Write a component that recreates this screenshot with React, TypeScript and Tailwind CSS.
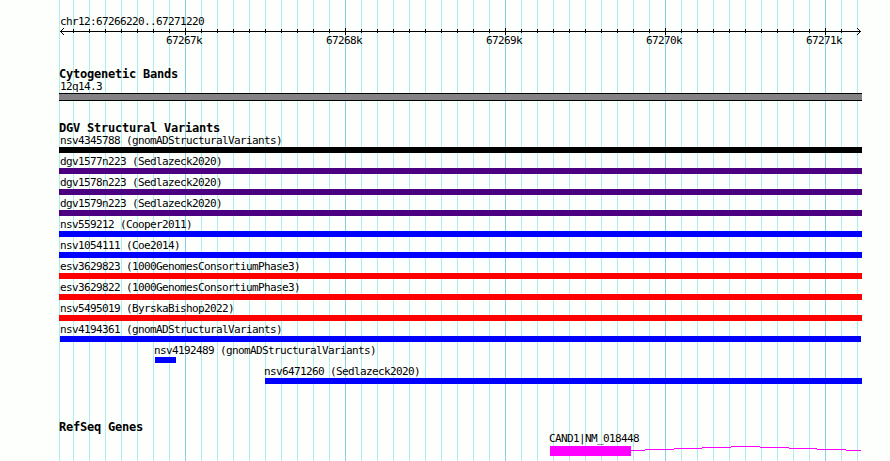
const MINOR = Array.from({ length: 50 }, (_, i) => 73 + i * 16);
const isMajor = (x: number) => (x - 185) % 160 === 0;

const BLACK = 'bg-black';
const INDIGO = 'bg-[#4b0082]';
const BLUE = 'bg-[#0000ff]';
const RED = 'bg-[#ff0000]';

const VARIANTS = [
  { name: 'nsv4345788 (gnomADStructuralVariants)', color: BLACK },
  { name: 'dgv1577n223 (Sedlazeck2020)', color: INDIGO },
  { name: 'dgv1578n223 (Sedlazeck2020)', color: INDIGO },
  { name: 'dgv1579n223 (Sedlazeck2020)', color: INDIGO },
  { name: 'nsv559212 (Cooper2011)', color: BLUE },
  { name: 'nsv1054111 (Coe2014)', color: BLUE },
  { name: 'esv3629823 (1000GenomesConsortiumPhase3)', color: RED },
  { name: 'esv3629822 (1000GenomesConsortiumPhase3)', color: RED },
  { name: 'nsv5495019 (ByrskaBishop2022)', color: RED },
  { name: 'nsv4194361 (gnomADStructuralVariants)', color: BLUE, row: 'pl-[60px]', label: '', bar: 'w-[801px]' },
  { name: 'nsv4192489 (gnomADStructuralVariants)', color: BLUE, row: 'pl-[155px]', label: '-ml-px', bar: 'w-[21px]' },
  { name: 'nsv6471260 (Sedlazeck2020)', color: BLUE, row: 'pl-[265px]', label: '-ml-px', bar: 'w-[597px]' },
];

const INTRON = 'M0 4.5H14M14 3.5H43M43 2.5H71M71 1.5H100M100 .5H129M129 1.5H158M158 2.5H186M186 3.5H215M215 4.5H230';

function Title({ children }: { children: string }) {
  return (
    <h2 className="h-3 pl-[59px] text-[12px] leading-[12px] font-bold tracking-[-0.224px]">{children}</h2>
  );
}

function Grid() {
  return (
    <svg className="absolute inset-0 -z-10" width="890" height="461" shapeRendering="crispEdges">
      <rect x="59" width="1" height="461" fill="#afeeee" />
      {MINOR.map((x) => (
        <rect key={x} x={x} width="1" height="461" fill={isMajor(x) ? '#87ceeb' : '#afeeee'} />
      ))}
    </svg>
  );
}

function Axis() {
  return (
    <svg className="block" width="890" height="7" shapeRendering="crispEdges">
      <rect x="60" y="3" width="801" height="1" />
      {[1, 2, 3].map((d) => (
        <g key={d}>
          <rect x={60 + d} y={3 - d} width="1" height="1" />
          <rect x={60 + d} y={3 + d} width="1" height="1" />
          <rect x={860 - d} y={3 - d} width="1" height="1" />
          <rect x={860 - d} y={3 + d} width="1" height="1" />
        </g>
      ))}
      {MINOR.slice(0, 49).map((x) =>
        isMajor(x) ? (
          <rect key={x} x={x} y="0" width="1" height="7" />
        ) : (
          <rect key={x} x={x} y="1" width="1" height="4" />
        ),
      )}
    </svg>
  );
}

export default function App() {
  return (
    <main className="relative isolate h-[461px] w-[890px] overflow-hidden bg-[#fdfffc] pt-[15px] font-['DejaVu_Sans_Mono',monospace] text-[11px] leading-[14px] tracking-[-0.622px] whitespace-pre text-black">
      <Grid />
      <header className="h-[53px]">
        <div className="h-[13px] pl-[60px]">chr12:67266220..67271220</div>
        <Axis />
        <div className="-mt-px flex gap-[124px] pl-[166px]">
          {['67267k', '67268k', '67269k', '67270k', '67271k'].map((t) => (
            <span key={t} className="w-9 shrink-0">{t}</span>
          ))}
        </div>
      </header>
      <section className="h-[54px]">
        <Title>Cytogenetic Bands</Title>
        <div className="h-[13px] pl-[60px]">12q14.3</div>
        <div className="ml-[59px] h-2 w-[803px] border-y border-black bg-[#848284]" />
      </section>
      <section className="h-[299px]">
        <Title>DGV Structural Variants</Title>
        {VARIANTS.map((v) => (
          <div key={v.name} className={`h-[21px] ${v.row ?? 'pl-[59px]'}`}>
            <div className={`h-[13px] ${v.label ?? 'pl-px'}`}>{v.name}</div>
            <div className={`h-1.5 ${v.bar ?? 'w-[803px]'} ${v.color}`} />
          </div>
        ))}
      </section>
      <section>
        <Title>RefSeq Genes</Title>
        <div className="h-[13px] pl-[549px] leading-[12px]">CAND1|NM_018448</div>
        <div className="flex pl-[550px]">
          <div className="h-2.5 w-[81px] bg-[#ff00ff]" />
          <svg className="block" width="230" height="10" shapeRendering="crispEdges">
            <path d={INTRON} stroke="#ff00ff" fill="none" />
          </svg>
        </div>
      </section>
    </main>
  );
}
